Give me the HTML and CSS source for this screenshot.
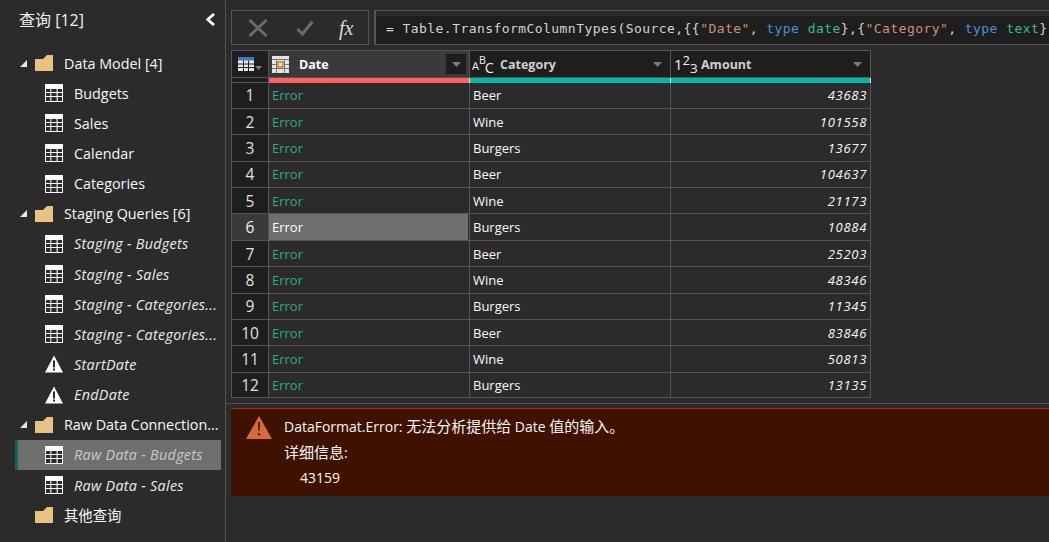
FILE: index.html
```html
<!DOCTYPE html>
<html lang="zh">
<head>
<meta charset="utf-8">
<title>查询</title>
<link rel="stylesheet" href="styles.css">
</head>
<body>
<svg class="defs" width="0" height="0">
  <symbol id="tbl" viewBox="0 0 18 18">
    <path fill="#fff" d="M0 0h18v18H0z"/>
    <path fill="#2b2b2b" d="M1 5h4.300v3H1zM6.300 5h5.300v3H6.300zM12.700 5H17v3h-4.300zM1 9h4.300v3H1zM6.300 9h5.300v3H6.300zM12.700 9H17v3h-4.300zM1 13h4.300v4H1zM6.300 13h5.300v4H6.300zM12.700 13H17v4h-4.300z"/>
  </symbol>
  <symbol id="folder" viewBox="0 0 18 16">
    <path fill="#e8c283" d="M0 4H8L12 0H18V16H0z"/>
  </symbol>
  <symbol id="warn" viewBox="0 0 18 17">
    <path fill="#fff" d="M9 0 18 17H0z"/>
    <path fill="#2b2b2b" d="M8 5h2v7H8zM8 13h2v2H8z"/>
  </symbol>
  <symbol id="tri" viewBox="0 0 7 7">
    <path fill="#e6e6e6" d="M7 0V7H0z"/>
  </symbol>
  <symbol id="caret" viewBox="0 0 9 5">
    <path fill="#7d7d7d" d="M0 0h9L4.500 5z"/>
  </symbol>
</svg>

<aside class="sidebar">
  <header class="side-head">
    <span class="side-title">查询 [12]</span>
    <svg class="chevron" viewBox="0 0 11 13"><path d="M9 1 2.700 6.500 9 12" fill="none" stroke="#fff" stroke-width="2.800"/></svg>
  </header>
  <ul class="tree">
    <li class="group"><svg class="tri"><use href="#tri"/></svg><svg class="folder"><use href="#folder"/></svg><span class="label">Data Model [4]</span></li>
    <li class="item"><svg class="ico"><use href="#tbl"/></svg><span class="label">Budgets</span></li>
    <li class="item"><svg class="ico"><use href="#tbl"/></svg><span class="label">Sales</span></li>
    <li class="item"><svg class="ico"><use href="#tbl"/></svg><span class="label">Calendar</span></li>
    <li class="item"><svg class="ico"><use href="#tbl"/></svg><span class="label">Categories</span></li>
    <li class="group"><svg class="tri"><use href="#tri"/></svg><svg class="folder"><use href="#folder"/></svg><span class="label">Staging Queries [6]</span></li>
    <li class="item em"><svg class="ico"><use href="#tbl"/></svg><span class="label">Staging - Budgets</span></li>
    <li class="item em"><svg class="ico"><use href="#tbl"/></svg><span class="label">Staging - Sales</span></li>
    <li class="item em"><svg class="ico"><use href="#tbl"/></svg><span class="label">Staging - Categories...</span></li>
    <li class="item em"><svg class="ico"><use href="#tbl"/></svg><span class="label">Staging - Categories...</span></li>
    <li class="item em"><svg class="ico"><use href="#warn"/></svg><span class="label">StartDate</span></li>
    <li class="item em"><svg class="ico"><use href="#warn"/></svg><span class="label">EndDate</span></li>
    <li class="group"><svg class="tri"><use href="#tri"/></svg><svg class="folder"><use href="#folder"/></svg><span class="label">Raw Data Connection...</span></li>
    <li class="item em selected"><svg class="ico"><use href="#tbl"/></svg><span class="label">Raw Data - Budgets</span></li>
    <li class="item em"><svg class="ico"><use href="#tbl"/></svg><span class="label">Raw Data - Sales</span></li>
    <li class="group plain"><svg class="folder"><use href="#folder"/></svg><span class="label label-cjk">其他查询</span></li>
  </ul>
</aside>

<main class="main">
  <div class="formula-row">
    <div class="formula-btns">
      <svg class="btn-x" viewBox="0 0 20 18"><path d="M1.500 1 18.500 17M18.500 1 1.500 17" fill="none" stroke="#6d6d6d" stroke-width="2.800"/></svg>
      <svg class="btn-check" viewBox="0 0 18 16"><path d="M1.500 9 6.500 14 16.500 1.500" fill="none" stroke="#6d6d6d" stroke-width="3"/></svg>
      <span class="fx">fx</span>
    </div>
    <div class="formula-box"><code class="code">= Table.TransformColumnTypes(Source,{{<span class="str">"Date"</span>, <span class="kw">type</span> <span class="ty">date</span>},{<span class="str">"Category"</span>, <span class="kw">type</span> <span class="ty">text</span>}</code></div>
  </div>

  <div class="grid">
    <div class="hd corner">
      <svg class="corner-ico" viewBox="0 0 16 14"><path fill="#e8e8e8" d="M0 0h16v14H0z"/><path fill="#3f78c4" d="M0 0h16v3.500H0z"/><path fill="#1e1e1e" d="M5 3.500h1v10.500H5zM10 3.500h1v10.500h-1zM0 6.500h16v1H0zM0 10h16v1H0z"/></svg>
      <svg class="caret-small"><use href="#caret"/></svg>
    </div>
    <div class="hd hd-date">
      <svg class="type-date" viewBox="0 0 17 17"><path fill="#e4e4e4" d="M0 0h17v17H0z"/><path fill="#777" d="M0 3h17v1H0zM0 8h17v1H0zM0 12h17v1H0zM4 3h1v14H4zM12 3h1v14h-1z"/><path fill="#e4e4e4" d="M5 5h7v7H5z"/><path fill="none" stroke="#d9762e" stroke-width="1.500" d="M6 6h5v5H6z"/></svg>
      <span class="hd-label">Date</span>
      <span class="filter"><svg class="caret"><use href="#caret"/></svg></span>
    </div>
    <div class="hd">
      <span class="type-abc"><span class="a1">A</span><span class="a2">B</span><span class="a3">C</span></span>
      <span class="hd-label">Category</span>
      <svg class="caret caret-end"><use href="#caret"/></svg>
    </div>
    <div class="hd">
      <span class="type-abc type-num"><span class="a1">1</span><span class="a2">2</span><span class="a3">3</span></span>
      <span class="hd-label">Amount</span>
      <svg class="caret caret-end"><use href="#caret"/></svg>
    </div>

    <div class="bar-blank"></div><div class="bar bar-red"></div><div class="bar bar-teal"></div><div class="bar bar-teal"></div>

    <div class="num">1</div><div class="cell err">Error</div><div class="cell">Beer</div><div class="cell val">43683</div>
    <div class="num">2</div><div class="cell err">Error</div><div class="cell">Wine</div><div class="cell val">101558</div>
    <div class="num">3</div><div class="cell err">Error</div><div class="cell">Burgers</div><div class="cell val">13677</div>
    <div class="num">4</div><div class="cell err">Error</div><div class="cell">Beer</div><div class="cell val">104637</div>
    <div class="num">5</div><div class="cell err">Error</div><div class="cell">Wine</div><div class="cell val">21173</div>
    <div class="num num-on">6</div><div class="cell cell-on">Error</div><div class="cell">Burgers</div><div class="cell val">10884</div>
    <div class="num">7</div><div class="cell err">Error</div><div class="cell">Beer</div><div class="cell val">25203</div>
    <div class="num">8</div><div class="cell err">Error</div><div class="cell">Wine</div><div class="cell val">48346</div>
    <div class="num">9</div><div class="cell err">Error</div><div class="cell">Burgers</div><div class="cell val">11345</div>
    <div class="num">10</div><div class="cell err">Error</div><div class="cell">Beer</div><div class="cell val">83846</div>
    <div class="num">11</div><div class="cell err">Error</div><div class="cell">Wine</div><div class="cell val">50813</div>
    <div class="num">12</div><div class="cell err">Error</div><div class="cell">Burgers</div><div class="cell val">13135</div>
  </div>

  <div class="divider"></div>

  <section class="error">
    <svg class="err-ico" viewBox="0 0 26 23"><path fill="#d66a3f" d="M13 0 26 23H0z"/><path fill="#5a2410" d="M11.800 6h2.400l-.4 9h-1.600zM11.800 17h2.400v2.500h-2.400z"/></svg>
    <div class="err-text">
      <p>DataFormat.Error: <span class="cjk">无法分析提供给</span> Date <span class="cjk">值的输入。</span></p>
      <p><span class="cjk">详细信息</span>:</p>
      <p class="err-val">43159</p>
    </div>
  </section>
</main>
</body>
</html>
```
FILE: styles.css
```css
* { box-sizing: border-box; }
html, body { height: 100%; }
body {
  margin: 0;
  display: flex;
  height: 542px;
  overflow: hidden;
  background: #2b2b2b;
  color: #fff;
  font-family: "Open Sans", "Noto Sans CJK SC", sans-serif;
}
.defs { position: absolute; }

.sidebar {
  width: 226px;
  flex: none;
  border-right: 1px solid #555;
}
.side-head {
  display: flex;
  align-items: center;
  justify-content: space-between;
  height: 40px;
  padding: 0 9px 2px 19px;
}
.side-title { font-size: 16px; color: #f0f0f0; }
.chevron { width: 11px; height: 13px; }
.tree {
  list-style: none;
  margin: 8px 0 0;
  padding: 0;
}
.group, .item {
  display: flex;
  align-items: center;
  height: 30.15px;
  font-size: 14.350px;
  color: #f8f8f8;
  white-space: nowrap;
}
.group { padding-left: 20px; }
.group.plain { padding-left: 35px; }
.tri { width: 7px; height: 7px; margin-right: 8px; }
.folder { width: 18px; height: 16px; margin-right: 11px; }
.item { padding-left: 45px; margin-right: 4px; }
.ico { width: 18px; height: 18px; margin-right: 11px; }
.label-cjk { padding-bottom: 2px; }
.em .label { font-style: italic; color: #ececec; letter-spacing: .3px; }
.selected {
  margin-left: 15px;
  padding-left: 27px;
  background: #6f6f6f;
  border-left: 3px solid #0c6a55;
}
.selected .label { color: #c9c9c9; }

.main {
  flex: 1;
  min-width: 0;
  display: flex;
  flex-direction: column;
}
.formula-row {
  display: flex;
  gap: 5px;
  height: 35px;
  margin: 10px 0 5px 5px;
}
.formula-btns {
  width: 138px;
  flex: none;
  display: flex;
  align-items: center;
  border: 1px solid #555;
}
.btn-x { width: 20px; height: 18px; margin-left: 16px; }
.btn-check { width: 18px; height: 16px; margin-left: 28px; }
.fx {
  margin-left: 25px;
  font-family: "Liberation Serif", serif;
  font-style: italic;
  font-size: 20px;
  line-height: 1;
  color: #dcdcdc;
}
.formula-box {
  flex: 1;
  min-width: 0;
  border-top: 1px solid #555;
  border-bottom: 1px solid #555;
  border-left: 2px solid #555;
  padding-top: 5px;
  overflow: hidden;
}
.code {
  display: block;
  height: 100%;
  padding: 2px 0 0 10px;
  background: #1e1e1e;
  font-family: "DejaVu Sans Mono", monospace;
  font-size: 13px;
  letter-spacing: .44px;
  line-height: 22px;
  color: #d4d4d4;
  white-space: nowrap;
}
.str { color: #ce9178; }
.kw { color: #4a90d9; }
.ty { color: #35b89a; }

.grid {
  display: grid;
  grid-template-columns: 37px 201px 201px 200px;
  grid-template-rows: 27px 4.500px repeat(12, 26.400px);
  width: 640px;
  height: 348px;
  margin-left: 5px;
  border-top: 1px solid #555;
  border-left: 1px solid #555;
  border-bottom: 1px solid #555;
  overflow: hidden;
}
.hd {
  display: flex;
  align-items: center;
  background: #1e1e1e;
  border-right: 1px solid #555;
  border-bottom: 1px solid #555;
  font-size: 12.500px;
  font-weight: 700;
  color: #d0d0d0;
  padding-left: 2px;
  min-width: 0;
}
.corner { padding-left: 6px; }
.corner-ico { width: 16px; height: 14px; }
.caret-small { width: 7px; height: 4px; margin: 8px 0 0 1px; }
.hd-date { background: #3a3a3a; color: #fff; }
.type-date { width: 17px; height: 17px; margin-right: 10px; margin-left: 1px; }
.hd-label { flex: 1; }
.filter {
  width: 20px;
  height: 20px;
  margin-right: 3px;
  background: #1e1e1e;
  display: flex;
  align-items: center;
  justify-content: center;
}
.caret { width: 9px; height: 5px; flex: none; }
.caret-end { margin-right: 8px; }
.type-abc {
  display: flex;
  align-items: flex-start;
  width: 28px;
  height: 22px;
  font-weight: 400;
  color: #f0f0f0;
  line-height: 1;
}
.a1 { margin-top: 7px; font-size: 11px; }
.a2 { margin: 2px 0 0 0; font-size: 10.500px; }
.a3 { margin: 8px 0 0 -1px; font-size: 14.500px; }
.type-num .a1 { margin: 4px 0 0 1px; font-size: 15px; }
.type-num .a2 { margin: 1px 0 0 0; font-size: 13px; }
.type-num .a3 { margin: 9px 0 0 0; font-size: 13.500px; }
.bar-blank {
  background: #1e1e1e;
  border-right: 1px solid #555;
  border-bottom: 1px solid #555;
}
.bar { border-right: 1px solid #e8e8e8; }
.bar-red { background: #ff6060; }
.bar-teal { background: #01b8aa; }
.num {
  display: flex;
  align-items: center;
  justify-content: center;
  background: #1e1e1e;
  border-right: 1px solid #555;
  border-bottom: 1px solid #555;
  font-size: 15.500px;
  color: #e0e0e0;
}
.num-on { background: #3a3a3a; color: #f4f4f4; }
.cell {
  display: flex;
  align-items: center;
  padding: 0 3px;
  border-right: 1px solid #555;
  border-bottom: 1px solid #555;
  font-size: 13px;
  color: #fafafa;
  min-width: 0;
}
.err { color: #2fa98a; }
.cell-on {
  background: #6f6f6f;
  color: #fff;
  box-shadow: inset -1px 0 0 #2b2b2b;
}
.val {
  justify-content: flex-end;
  font-style: italic;
  letter-spacing: .7px;
  padding-right: 3px;
}

.divider {
  height: 1px;
  margin-top: 5px;
  background: #555;
}
.error {
  display: flex;
  height: 88px;
  margin: 4px 0 0 5px;
  padding: 5px 0 0 15px;
  background: #3f1200;
  border-top: 1px solid #b32c00;
}
.err-ico { width: 26px; height: 23px; flex: none; margin: 2px 12px 0 0; }
.err-text { font-size: 14px; color: #f6f6f6; }
.err-text p { margin: 0; height: 25.500px; line-height: 25.500px; white-space: nowrap; }
.cjk { font-size: 15px; }
.err-val { padding-left: 16px; }
```
